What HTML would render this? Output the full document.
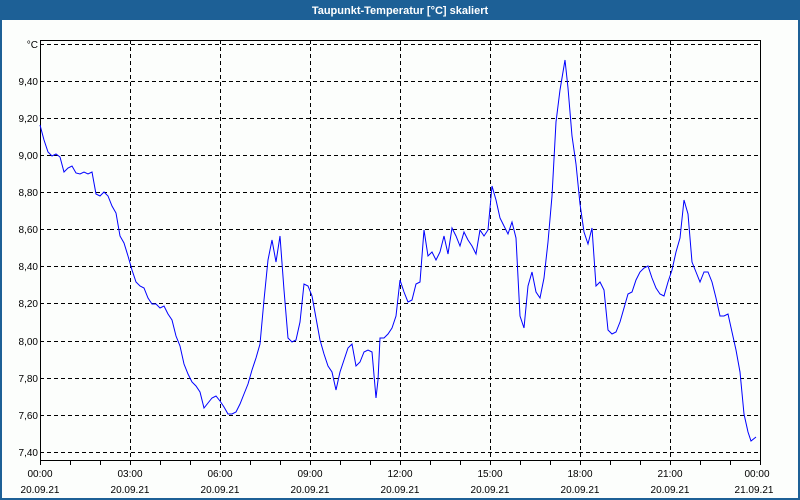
<!DOCTYPE html>
<html><head><style>
body{margin:0;width:800px;height:500px;overflow:hidden;background:#fcfefc;font-family:"Liberation Sans",Tahoma,sans-serif;}
</style></head><body>
<svg width="800" height="500" xmlns="http://www.w3.org/2000/svg" style="position:absolute;left:0;top:0">
<rect x="0" y="0" width="800" height="500" fill="#1d6096"/>
<rect x="2" y="20" width="796" height="478" fill="#fcfefc"/>
<text x="400" y="14" fill="#fff" font-size="11" font-weight="bold" text-anchor="middle" font-family="Liberation Sans,sans-serif">Taupunkt-Temperatur [°C] skaliert</text>
<g stroke="#000" stroke-width="1" stroke-dasharray="4,3" fill="none">
<path d="M40 44.5H760M40 81.5H760M40 118.5H760M40 155.5H760M40 192.5H760M40 229.5H760M40 266.5H760M40 303.5H760M40 341.5H760M40 378.5H760M40 415.5H760M40 452.5H760"/>
<path d="M130.5 40V460M220.5 40V460M310.5 40V460M400.5 40V460M490.5 40V460M580.5 40V460M670.5 40V460"/>
</g>
<rect x="40.5" y="40.5" width="720" height="420" fill="none" stroke="#000"/>
<g stroke="#000"><path d="M70.5 460v5M100.5 460v5M130.5 460v5M160.5 460v5M190.5 460v5M220.5 460v5M250.5 460v5M280.5 460v5M310.5 460v5M340.5 460v5M370.5 460v5M400.5 460v5M430.5 460v5M460.5 460v5M490.5 460v5M520.5 460v5M550.5 460v5M580.5 460v5M610.5 460v5M640.5 460v5M670.5 460v5M700.5 460v5M730.5 460v5M40.5 460v5M760.5 460v5"/></g>
<g font-size="10" fill="#000" text-anchor="end" font-family="Liberation Sans,sans-serif">
<text x="38" y="48">°C</text><text x="38" y="85">9,40</text><text x="38" y="122">9,20</text><text x="38" y="159">9,00</text><text x="38" y="196">8,80</text><text x="38" y="233">8,60</text><text x="38" y="270">8,40</text><text x="38" y="307">8,20</text><text x="38" y="345">8,00</text><text x="38" y="382">7,80</text><text x="38" y="419">7,60</text><text x="38" y="456">7,40</text>
</g>
<g font-size="10" fill="#000" text-anchor="middle" font-family="Liberation Sans,sans-serif">
<text x="40" y="477">00:00</text><text x="40" y="493">20.09.21</text>
<text x="130" y="477">03:00</text><text x="130" y="493">20.09.21</text>
<text x="220" y="477">06:00</text><text x="220" y="493">20.09.21</text>
<text x="310" y="477">09:00</text><text x="310" y="493">20.09.21</text>
<text x="400" y="477">12:00</text><text x="400" y="493">20.09.21</text>
<text x="490" y="477">15:00</text><text x="490" y="493">20.09.21</text>
<text x="580" y="477">18:00</text><text x="580" y="493">20.09.21</text>
<text x="670" y="477">21:00</text><text x="670" y="493">20.09.21</text>
<text x="757" y="477">00:00</text><text x="754" y="493">21.09.21</text>
</g>
<polyline fill="none" stroke="#0000ff" stroke-width="1" points="40,125 44,140 48,152 52,156 56,154 60,157 64,172 68,168 72,166 76,173 80,174 84,172 88,174 92,172 96,194 100,196 104,192 108,196 112,206 116,213 120,236 124,243 128,256 132,270 136,282 140,286 144,288 148,298 152,304 156,304 160,308 164,306 168,314 172,320 176,336 180,346 184,364 188,374 192,382 196,386 200,392 204,408 208,403 212,398 216,396 220,401 224,407 228,414 232,414 236,412 240,404 244,394 248,384 252,370 256,358 260,344 264,300 268,260 272,240 276,262 280,236 284,290 288,338 292,342 296,340 300,322 304,284 308,286 312,296 316,318 320,340 324,354 328,366 332,372 336,390 340,372 344,360 348,348 352,344 356,366 360,362 364,352 368,350 372,352 376,398 378,380 380,338 384,338 388,334 392,328 396,316 400,280 404,292 408,302 412,300 416,284 420,282 424,230 428,256 432,252 436,260 440,252 444,236 448,254 452,228 456,236 460,246 464,232 468,240 472,246 476,254 480,230 484,236 488,230 492,186 496,200 500,218 504,226 508,234 512,222 516,238 520,316 524,328 528,286 532,272 536,292 540,298 544,278 548,242 552,196 556,122 560,90 565,60 568,88 572,136 576,164 580,204 584,232 588,244 592,228 596,286 600,282 604,290 608,330 612,334 616,332 620,322 624,308 628,294 632,292 636,280 640,272 644,268 648,266 652,278 656,288 660,294 664,296 668,282 672,270 676,252 680,238 684,200 688,214 692,262 696,272 700,282 704,272 708,272 712,282 716,298 720,316 724,316 728,314 732,332 736,350 740,372 744,414 748,432 751,441 756,437"/>
</svg>
</body></html>
